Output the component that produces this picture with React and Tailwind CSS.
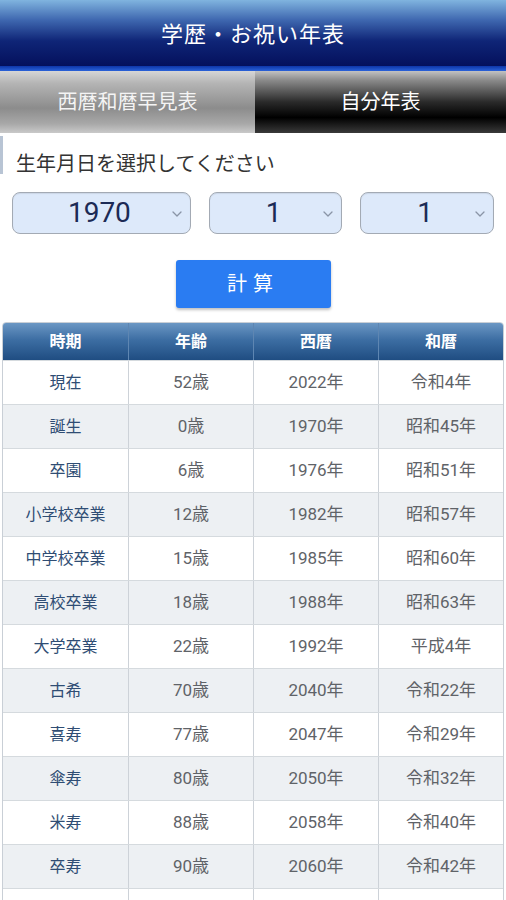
import React, { useState } from 'react';

const rows = [
  ['現在', '52歳', '2022年', '令和4年'],
  ['誕生', '0歳', '1970年', '昭和45年'],
  ['卒園', '6歳', '1976年', '昭和51年'],
  ['小学校卒業', '12歳', '1982年', '昭和57年'],
  ['中学校卒業', '15歳', '1985年', '昭和60年'],
  ['高校卒業', '18歳', '1988年', '昭和63年'],
  ['大学卒業', '22歳', '1992年', '平成4年'],
  ['古希', '70歳', '2040年', '令和22年'],
  ['喜寿', '77歳', '2047年', '令和29年'],
  ['傘寿', '80歳', '2050年', '令和32年'],
  ['米寿', '88歳', '2058年', '令和40年'],
  ['卒寿', '90歳', '2060年', '令和42年'],
  ['', '', '', ''],
];

const Chevron = () => (
  <svg className="w-[10px] h-[6px]" viewBox="0 0 10 6" fill="none">
    <path d="M1 1l4 4 4-4" stroke="#8a94a6" strokeWidth="1.3" strokeLinecap="round" strokeLinejoin="round" />
  </svg>
);

const DateSelect = ({ value, width }) => (
  <div className={`${width} h-[42px] flex items-center rounded-[8px] border border-[#a3aab4] bg-[#dde9fa] shadow-[inset_0_1px_1px_rgba(0,0,0,0.08)]`}>
    <span className="flex-1 text-center text-[28px] leading-none text-[#1b2a55] pl-[14px]">{value}</span>
    <span className="pr-[8px] pt-[2px]"><Chevron /></span>
  </div>
);

export default function App() {
  const [tab, setTab] = useState(1);

  return (
    <div className="w-[506px] h-[900px] overflow-hidden bg-white font-['Roboto','Noto_Sans_CJK_JP',sans-serif]">
      {/* ヘッダー */}
      <div className="h-[66px] flex items-center justify-center bg-[linear-gradient(to_bottom,#80b4df_0%,#3f68b0_30%,#0f2577_62%,#04105c_100%)]">
        <h1 className="text-white text-[22px] tracking-[1px] pt-[2px]">学歴・お祝い年表</h1>
      </div>
      <div className="h-[5px] bg-[linear-gradient(to_bottom,#0d35a8,#2a62d8)]" />

      {/* タブ */}
      <div className="flex h-[62px] bg-white">
        <button
          onClick={() => setTab(0)}
          className="w-[255px] flex items-center justify-center text-[#f4f4f4] text-[20px] bg-[linear-gradient(to_bottom,#d6d6d6_0%,#b4b4b4_20%,#8c8c8c_60%,#a8a8a8_85%,#c9c9c9_100%)]"
        >
          西暦和暦早見表
        </button>
        <button
          onClick={() => setTab(1)}
          className="flex-1 flex items-center justify-center text-white text-[20px] bg-[linear-gradient(to_bottom,#c2c2c2_0%,#8a8a8a_15%,#2a2a2a_50%,#000_75%,#3a3a3a_100%)]"
        >
          自分年表
        </button>
      </div>

      {/* 入力 */}
      <div className="border-l-[3px] border-[#b8c4d4] h-[38px] flex items-end pl-[13px] mt-[3px]">
        <p className="text-[20px] text-[#333] leading-none">生年月日を選択してください</p>
      </div>
      <div className="flex items-center gap-[18px] px-[12px] mt-[18px]">
        <DateSelect value="1970" width="w-[182px]" />
        <DateSelect value="1" width="w-[136px]" />
        <DateSelect value="1" width="w-[136px]" />
      </div>
      <div className="flex justify-center mt-[26px]">
        <button className="w-[155px] h-[48px] rounded-[3px] bg-[#2a7cf2] text-white text-[20px] tracking-[6px] shadow-[0_2px_3px_rgba(0,0,0,0.25)]">
          計算
        </button>
      </div>

      {/* 年表 */}
      <div className="mt-[14px] mx-[2px] border border-[#c9cfd6] rounded-t-[4px] overflow-hidden">
        <div className="grid grid-cols-4 h-[37px] bg-[linear-gradient(to_bottom,#6b97c4_0%,#3d6ea3_45%,#1f4d82_100%)]">
          {['時期', '年齢', '西暦', '和暦'].map((h, i) => (
            <div
              key={h}
              className={`flex items-center justify-center text-white text-[16px] font-bold ${i > 0 ? 'border-l border-[#5e86b2]' : ''}`}
            >
              {h}
            </div>
          ))}
        </div>
        {rows.map((r, idx) => (
          <div
            key={idx}
            className={`grid grid-cols-4 h-[44px] border-t border-[#d5dade] ${idx % 2 === 0 ? 'bg-white' : 'bg-[#edf0f3]'}`}
          >
            {r.map((c, i) => (
              <div
                key={i}
                className={`flex items-center justify-center ${i === 0 ? 'text-[#2f4d74] text-[16px]' : 'text-[#5f6368] text-[17px]'} ${i > 0 ? 'border-l border-[#cdd2d8]' : ''}`}
              >
                {c}
              </div>
            ))}
          </div>
        ))}
      </div>
    </div>
  );
}
